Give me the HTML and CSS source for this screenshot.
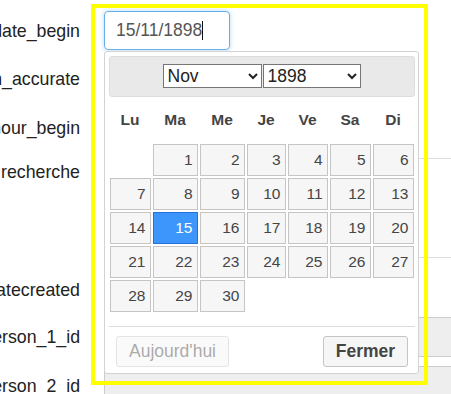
FILE: index.html
```html
<!DOCTYPE html>
<html lang="fr">
<head>
    <meta charset="UTF-8">
    <meta name="viewport" content="width=device-width, initial-scale=1.0">
    <link rel="stylesheet" href="styles.css">
</head>
<body>
    <!-- Formulaire en arrière-plan -->
    <form class="form">
        <div class="label"><span>date_begin</span></div>
        <div class="field"><div class="date-input">15/11/1898<span class="caret"></span></div></div>

        <div class="label"><span>date_begin_accurate</span></div>
        <div class="field"></div>

        <div class="label"><span>hour_begin</span></div>
        <div class="field"></div>

        <div class="label label-top"><span>recherche</span></div>
        <div class="field"><div class="textarea"></div></div>

        <div class="label"><span>datecreated</span></div>
        <div class="field"></div>

        <div class="label"><span>person_1_id</span></div>
        <div class="field"><div class="readonly"></div></div>

        <div class="label"><span>person_2_id</span></div>
        <div class="field"><div class="readonly"></div></div>
    </form>

    <!-- Calendrier -->
    <div class="datepicker">
        <div class="dp-header">
            <select class="dp-month">
                <option>Jan</option><option>Fév</option><option>Mar</option><option>Avr</option>
                <option>Mai</option><option>Jui</option><option>Jul</option><option>Aoû</option>
                <option>Sep</option><option>Oct</option><option selected>Nov</option><option>Déc</option>
            </select>
            <select class="dp-year">
                <option>1897</option><option selected>1898</option><option>1899</option>
            </select>
        </div>

        <div class="dp-grid">
            <div class="dp-dow">Lu</div>
            <div class="dp-dow">Ma</div>
            <div class="dp-dow">Me</div>
            <div class="dp-dow">Je</div>
            <div class="dp-dow">Ve</div>
            <div class="dp-dow">Sa</div>
            <div class="dp-dow">Di</div>

            <a class="dp-day first">1</a>
            <a class="dp-day">2</a>
            <a class="dp-day">3</a>
            <a class="dp-day">4</a>
            <a class="dp-day">5</a>
            <a class="dp-day">6</a>
            <a class="dp-day">7</a>
            <a class="dp-day">8</a>
            <a class="dp-day">9</a>
            <a class="dp-day">10</a>
            <a class="dp-day">11</a>
            <a class="dp-day">12</a>
            <a class="dp-day">13</a>
            <a class="dp-day">14</a>
            <a class="dp-day active">15</a>
            <a class="dp-day">16</a>
            <a class="dp-day">17</a>
            <a class="dp-day">18</a>
            <a class="dp-day">19</a>
            <a class="dp-day">20</a>
            <a class="dp-day">21</a>
            <a class="dp-day">22</a>
            <a class="dp-day">23</a>
            <a class="dp-day">24</a>
            <a class="dp-day">25</a>
            <a class="dp-day">26</a>
            <a class="dp-day">27</a>
            <a class="dp-day">28</a>
            <a class="dp-day">29</a>
            <a class="dp-day">30</a>
        </div>

        <div class="dp-footer">
            <button class="dp-btn dp-today" type="button">Aujourd'hui</button>
            <button class="dp-btn dp-close" type="button">Fermer</button>
        </div>
    </div>

    <!-- Cadre de mise en évidence -->
    <div class="highlight"></div>
</body>
</html>
```

FILE: styles.css
```css
/* Page */
body {
    margin: 0;
    overflow: hidden;
    font-family: "Liberation Sans", Arial, sans-serif;
    font-size: 17.5px;
    color: #222;
    background: #fff;
}

/* Formulaire */
.form {
    display: grid;
    grid-template-columns: 80px 1fr;
    grid-template-rows: 48px 49px 50px 112px 47px 49px 40px;
    column-gap: 24px;
    padding-top: 11px;
}

.label {
    display: flex;
    justify-content: flex-end; /* le texte déborde vers la gauche */
    white-space: nowrap;
    font-size: 17.75px;
    line-height: 20px;
    padding-top: 10px;
}

.label-top {
    padding-top: 4px;
}

.field {
    min-width: 0;
}

.date-input {
    box-sizing: border-box;
    width: 126px;
    height: 39px;
    padding: 0 11px;
    line-height: 37px;
    color: #555;
    border: 1px solid #66afe9;
    border-radius: 4px;
    box-shadow: 0 0 4px rgba(102, 175, 233, 0.5);
}

.caret {
    display: inline-block;
    width: 1px;
    height: 19px;
    background: #111;
    vertical-align: -4px;
}

.textarea {
    box-sizing: border-box;
    width: calc(100% + 2px);
    height: 100px;
    border: 1px solid #ddd;
}

.readonly {
    box-sizing: border-box;
    width: calc(100% + 2px);
    height: 40px;
    background: #eee;
    border: 1px solid #ccc;
}

/* Calendrier */
.datepicker {
    position: absolute;
    left: 104px;
    top: 51px;
    box-sizing: border-box;
    width: 315px;
    padding: 3.5px 3.5px 0;
    background: #fff;
    border: 1px solid #d3d3d3;
    border-radius: 3px;
}

.dp-header {
    display: flex;
    justify-content: center;
    align-items: center;
    height: 41px;
    box-sizing: border-box;
    background: #e9e9e9;
    border: 1px solid #ddd;
    border-radius: 3px;
}

.dp-header select {
    height: 24px;
    margin: 0 0.5px;
    font-family: "Liberation Sans", Arial, sans-serif;
    font-size: 17.5px;
    color: #222;
    background: #fff;
    border: 1px solid #767676;
    border-radius: 0;
}

.dp-month {
    width: 99px;
}

.dp-year {
    width: 98px;
}

.dp-grid {
    display: grid;
    grid-template-columns: 41px 45px 45px 39px 40px 41px 41px;
    grid-template-rows: 44px repeat(5, 32px);
    gap: 2px;
    padding: 1px;
}

.dp-dow {
    display: flex;
    justify-content: center;
    align-items: center;
    font-weight: bold;
    font-size: 15.5px;
    color: #444;
}

.dp-day {
    display: block;
    box-sizing: border-box;
    padding: 0 4px;
    line-height: 30px;
    text-align: right;
    font-size: 15.5px;
    color: #454545;
    background: #f6f6f6;
    border: 1px solid #c5c5c5;
}

.dp-day.first {
    grid-column-start: 2;
}

.dp-day.active {
    color: #fff;
    background: #3d96fb;
    border-color: #2b6fdc;
}

.dp-footer {
    display: flex;
    justify-content: space-between;
    margin-top: 13.5px;
    padding: 9px 6.5px 6px 7.5px;
    border-top: 1px solid #ddd;
}

.dp-btn {
    box-sizing: border-box;
    height: 31px;
    padding: 0;
    font-family: "Liberation Sans", Arial, sans-serif;
    font-size: 17.5px;
    color: #454545;
    background: #f6f6f6;
    border: 1px solid #c5c5c5;
    border-radius: 3px;
}

.dp-today {
    width: 113px;
    opacity: 0.45;
}

.dp-close {
    width: 85px;
    font-weight: bold;
}

/* Cadre jaune */
.highlight {
    position: absolute;
    left: 91px;
    top: 4px;
    width: 329px;
    height: 373px;
    border: 4px solid #ffff00;
    pointer-events: none;
}
```
